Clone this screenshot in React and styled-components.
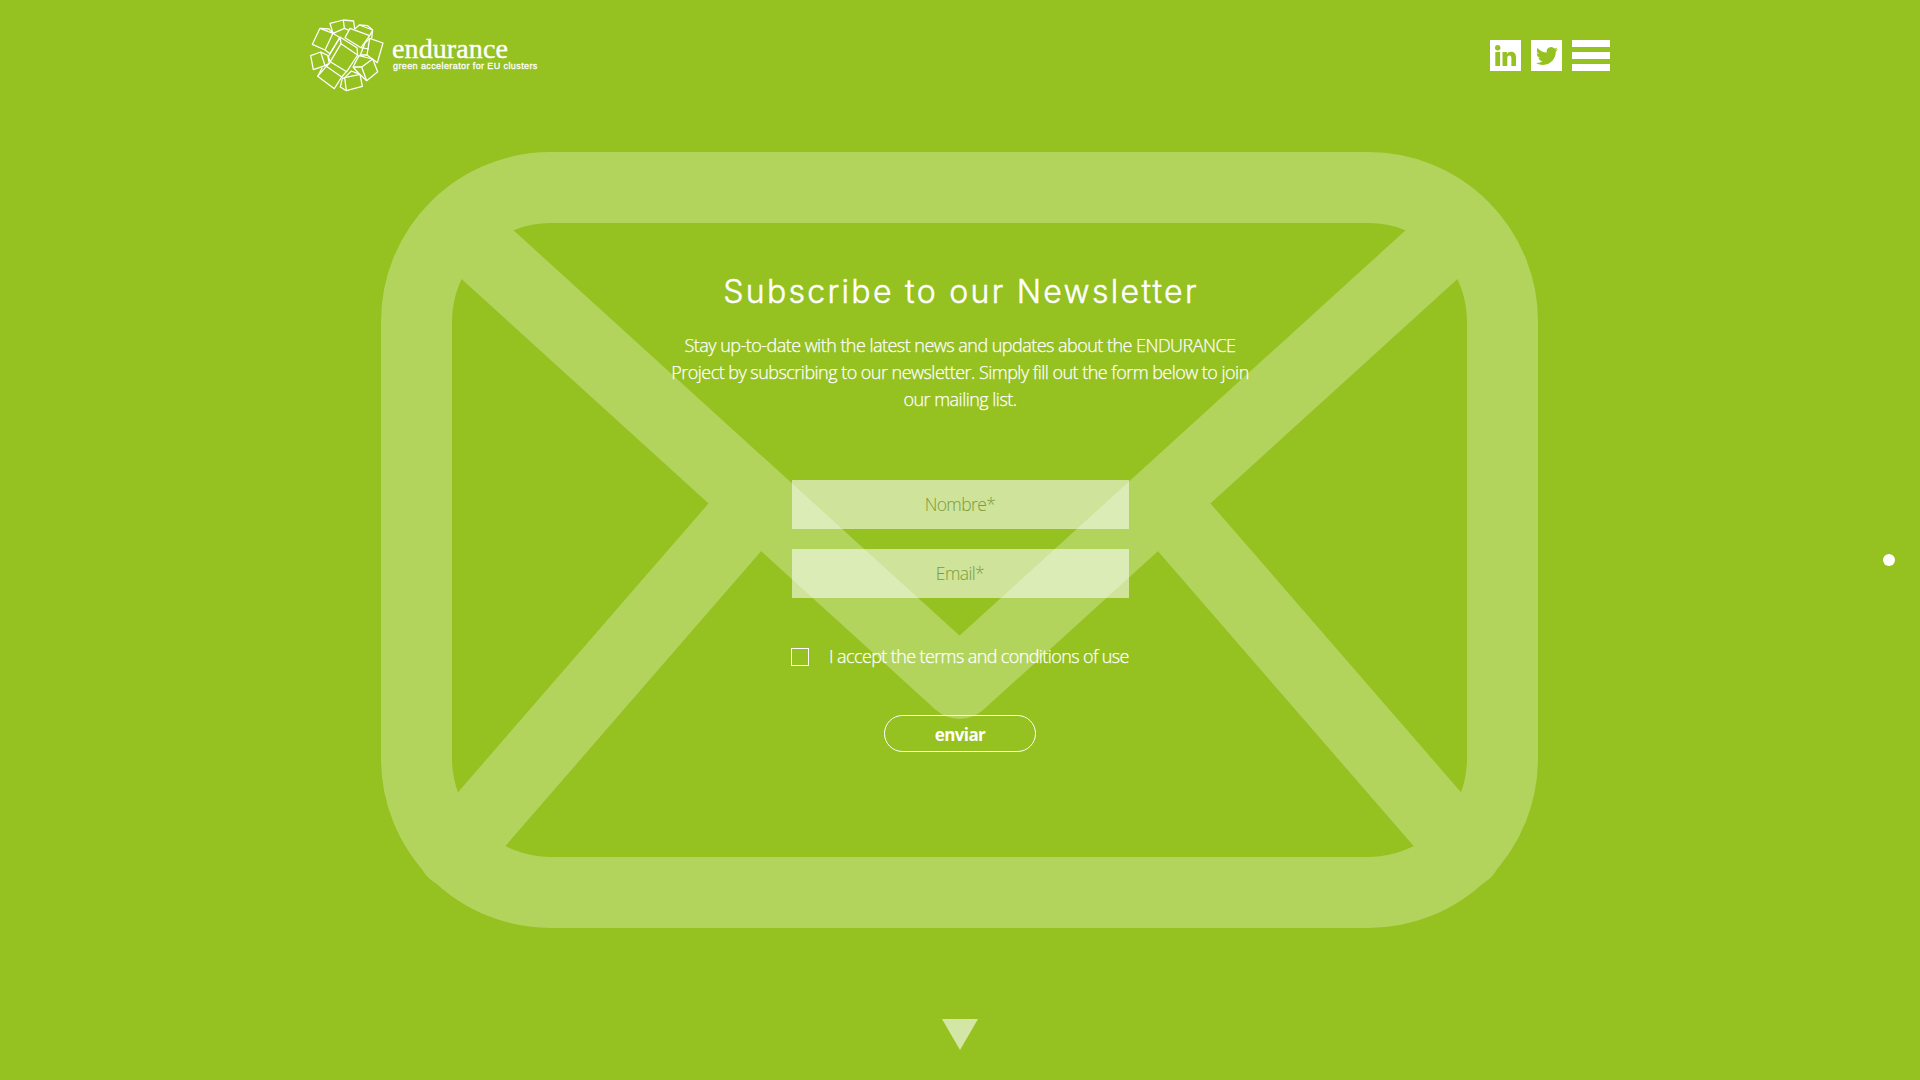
import React from "react";
import styled, { createGlobalStyle } from "styled-components";

const GREEN = "#95c121";

const GlobalStyle = createGlobalStyle`
  *, *::before, *::after { box-sizing: border-box; }
  body {
    margin: 0;
    background: ${GREEN};
    color: #fff;
    font-family: "Open Sans", "Noto Sans", sans-serif;
  }
`;

const Page = styled.div`
  position: relative;
  display: flex;
  flex-direction: column;
  align-items: center;
  width: 100%;
  height: 1080px;
  overflow: hidden;
`;

const Envelope = styled.svg`
  position: absolute;
  top: 152px;
  left: 381px;
  width: 1157px;
  height: 776px;
`;

const Header = styled.header`
  display: flex;
  justify-content: space-between;
  align-items: center;
  width: 1300px;
  height: 111px;
`;

const Brand = styled.a`
  display: flex;
  align-items: center;
  margin-top: -1px;
`;

const Mark = styled.svg`
  width: 82px;
  height: 80px;
  margin-left: -5px;
`;

const BrandText = styled.div`
  display: flex;
  flex-direction: column;
  margin: -3px 0 0 5px;
`;

const BrandName = styled.span`
  font: 28px/28px "Liberation Serif", serif;
  letter-spacing: 0.1px;
  -webkit-text-stroke: 0.4px #fff;
  white-space: nowrap;
`;

const Tagline = styled.span`
  margin: -3px 0 0 1px;
  font: 9px/12px "Liberation Sans", sans-serif;
  letter-spacing: 0.4px;
  -webkit-text-stroke: 0.3px #fff;
  white-space: nowrap;
`;

const Actions = styled.nav`
  display: flex;
  gap: 10px;
`;

const Social = styled.a`
  display: flex;
  align-items: center;
  justify-content: center;
  width: 31px;
  height: 31px;
  background: #fff;
  color: ${GREEN};
`;

const MenuButton = styled.button`
  display: flex;
  flex-direction: column;
  justify-content: space-between;
  width: 38px;
  height: 31px;
  padding: 0;
  border: 0;
  background: none;
`;

const Bar = styled.span`
  height: 7px;
  background: #fff;
`;

const Main = styled.main`
  position: relative;
  display: flex;
  flex-direction: column;
  align-items: center;
  width: 600px;
  padding-top: 158px;
`;

const Title = styled.h1`
  margin: 0;
  font: 300 32px/46px Inter, sans-serif;
  letter-spacing: 2.3px;
  margin-right: -2px;
  -webkit-text-stroke: 0.5px #fff;
  white-space: nowrap;
`;

const Intro = styled.p`
  display: flex;
  flex-direction: column;
  align-items: center;
  margin: 17px 0 0;
  font-size: 18px;
  font-weight: 300;
  line-height: 27px;
  letter-spacing: -0.53px;
  -webkit-text-stroke: 0.25px #fff;
  white-space: nowrap;
`;

const Form = styled.form`
  display: flex;
  flex-direction: column;
  align-items: center;
  width: 337px;
  margin-top: 67px;
`;

const Field = styled.input`
  width: 100%;
  height: 49px;
  margin-bottom: 20px;
  padding: 0 0 1px;
  border: 0;
  border-radius: 0;
  background: rgba(255, 255, 255, 0.55);
  text-align: center;
  font: 300 17.5px "Open Sans", sans-serif;
  letter-spacing: -0.6px;
  &::placeholder { color: #7a9c3a; opacity: 1; }
`;

const Terms = styled.label`
  display: flex;
  align-items: center;
  gap: 20px;
  height: 28px;
  margin: 25px 0 0;
  font-size: 18px;
  font-weight: 300;
  letter-spacing: -0.61px;
  -webkit-text-stroke: 0.25px #fff;
  white-space: nowrap;
`;

const TermsText = styled.span`
  padding-bottom: 2px;
`;

const Check = styled.input`
  appearance: none;
  width: 18px;
  height: 18px;
  margin: 0;
  border: 1px solid #fff;
`;

const Submit = styled.button`
  width: 152px;
  height: 37px;
  margin-top: 44px;
  padding: 2px 0 0;
  border: 1px solid #fff;
  border-radius: 19px;
  background: none;
  color: #fff;
  font: 700 17px "Open Sans", sans-serif;
  letter-spacing: -0.6px;
`;

const PageDot = styled.span`
  position: absolute;
  top: 554px;
  right: 25px;
  width: 12px;
  height: 12px;
  border-radius: 50%;
  background: #fff;
`;

const ScrollDown = styled.svg`
  width: 36px;
  height: 31px;
  margin-top: auto;
  margin-bottom: 30px;
`;

const cubes = [
  "M45 40L84 55L60 105L22 88Z",
  "M84 55L105 68L75 116L60 105M45 40L72 42L84 55",
  "M75 25L115 15L118 40L84 55Z",
  "M115 15L146 18L149 42M118 40L132 46",
  "M135 40L120 68L168 98L194 62Z",
  "M149 42L163 30L203 45L200 70M194 62L203 45M168 98L192 102",
  "M163 30L188 32L203 45",
  "M194 70L234 84L217 143L186 120Z",
  "M194 70L180 84L166 120L186 120",
  "M108 86L158 120L125 170L76 140Z",
  "M108 86L105 66L156 98L158 120M105 66L70 125L76 140",
  "M17 122L47 111L60 152L25 164Z",
  "M47 111L68 121L73 145L60 152",
  "M64 154L110 186L88 221L38 184Z",
  "M64 154L76 142M38 184L52 158M110 186L124 170",
  "M119 188L165 178L172 214L124 227Z",
  "M119 188L112 190L106 216L124 227M119 188L139 168L165 178",
  "M170 156L203 132L218 170L185 197Z",
  "M170 156L144 156M203 132L162 122L144 156L160 174L185 197",
];

export default function App() {
  return (
    <Page>
      <GlobalStyle />
      <Envelope viewBox="381 152 1157 776" fill="none" stroke="#b2d45d" strokeWidth="71" aria-hidden="true">
        <rect x="416.5" y="187.5" width="1086" height="705" rx="134" />
        <path d="M440 211.5L959.5 683.5L1479 211.5" strokeLinejoin="round" />
        <path d="M735.5 526.5L453 852.2M1183.5 526.5L1466 852.2" strokeLinecap="round" />
      </Envelope>
      <Header>
        <Brand>
          <Mark viewBox="0 0 246 240" fill="none" stroke="#fff" strokeWidth="3.8" strokeLinejoin="round">
            {cubes.map((d) => <path key={d} d={d} />)}
          </Mark>
          <BrandText>
            <BrandName>endurance</BrandName>
            <Tagline>green accelerator for EU clusters</Tagline>
          </BrandText>
        </Brand>
        <Actions>
          <Social aria-label="LinkedIn">
            <svg width="21" height="21" viewBox="0 0 21 21" fill="currentColor">
              <circle cx="2.7" cy="2.7" r="2.7" />
              <path d="M.3 7H5.1V21H.3ZM7.5 7H11.9V8.9C12.7 7.5 14.2 6.7 16 6.7C19.8 6.7 21 9 21 12.8V21H16.4V13.6C16.4 11.7 16 10.6 14.4 10.6C12.8 10.6 12.3 11.8 12.3 13.6V21H7.5Z" />
            </svg>
          </Social>
          <Social aria-label="Twitter">
            <svg width="22" height="22" viewBox="0 0 24 24" fill="currentColor">
              <path d="M23.95 4.57a10 10 0 0 1-2.82.77 4.96 4.96 0 0 0 2.16-2.72c-.95.55-2 .96-3.13 1.18a4.92 4.92 0 0 0-8.38 4.48C7.69 8.09 4.07 6.13 1.64 3.16a4.82 4.82 0 0 0-.67 2.48c0 1.71.87 3.21 2.19 4.1a4.9 4.9 0 0 1-2.23-.62v.06a4.92 4.92 0 0 0 3.95 4.83 5 5 0 0 1-2.21.08 4.94 4.94 0 0 0 4.6 3.42A9.87 9.87 0 0 1 0 19.54a14 14 0 0 0 7.55 2.21c9.05 0 14-7.5 14-13.98 0-.21 0-.42-.02-.63a9.94 9.94 0 0 0 2.42-2.57z" />
            </svg>
          </Social>
          <MenuButton aria-label="Menu"><Bar /><Bar /><Bar /></MenuButton>
        </Actions>
      </Header>
      <Main>
        <Title>Subscribe to our Newsletter</Title>
        <Intro>
          <span>Stay up-to-date with the latest news and updates about the ENDURANCE</span>
          <span>Project by subscribing to our newsletter. Simply fill out the form below to join</span>
          <span>our mailing list.</span>
        </Intro>
        <Form>
          <Field placeholder="Nombre*" />
          <Field placeholder="Email*" />
          <Terms><Check type="checkbox" /><TermsText>I accept the terms and conditions of use</TermsText></Terms>
          <Submit type="button">enviar</Submit>
        </Form>
      </Main>
      <PageDot />
      <ScrollDown viewBox="0 0 36 31"><path d="M0 0H36L18 31Z" fill="#fff" fillOpacity="0.6" /></ScrollDown>
    </Page>
  );
}
